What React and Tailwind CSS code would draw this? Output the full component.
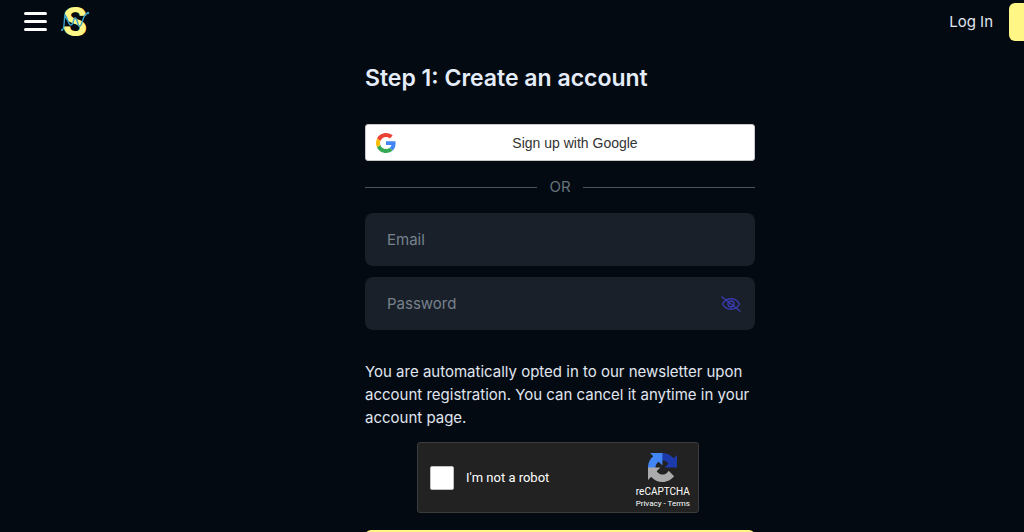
import { useState } from "react";

const Logo = () => (
  <svg width="32" height="44" viewBox="0 0 32 44" className="overflow-visible" aria-hidden="true">
    <text
      x="15"
      y="36"
      textAnchor="middle"
      className="fill-[#fff685] font-[Roboto,sans-serif] text-[40px] font-extrabold"
    >
      S
    </text>
    <path
      d="M2 30 C5 30 4 16 5 15 C8 18 8 25 11 25 C14 25 13 18 15 18 C18 18 17 27 20 26 C23 25 22 14 28 13"
      fill="none"
      stroke="#3aa0c8"
      strokeWidth="1.4"
      strokeLinecap="round"
    />
    <circle cx="2" cy="30" r="1" fill="#3aa0c8" />
    <circle cx="28" cy="13" r="1.2" fill="#3aa0c8" />
  </svg>
);

const GoogleIcon = () => (
  <svg width="20" height="20" viewBox="0 0 48 48" aria-hidden="true">
    <path fill="#EA4335" d="M24 9.5c3.54 0 6.71 1.22 9.21 3.6l6.85-6.85C35.9 2.38 30.47 0 24 0 14.62 0 6.51 5.38 2.56 13.22l7.98 6.19C12.43 13.72 17.74 9.5 24 9.5z" />
    <path fill="#4285F4" d="M46.98 24.55c0-1.57-.15-3.09-.38-4.55H24v9.02h12.94c-.58 2.96-2.26 5.48-4.78 7.18l7.73 6c4.51-4.18 7.09-10.36 7.09-17.65z" />
    <path fill="#FBBC05" d="M10.53 28.59c-.48-1.45-.76-2.99-.76-4.59s.27-3.14.76-4.59l-7.98-6.19C.92 16.46 0 20.12 0 24c0 3.88.92 7.54 2.56 10.78l7.97-6.19z" />
    <path fill="#34A853" d="M24 48c6.48 0 11.93-2.13 15.89-5.81l-7.73-6c-2.15 1.45-4.92 2.3-8.16 2.3-6.26 0-11.57-4.22-13.47-9.91l-7.98 6.19C6.51 42.62 14.62 48 24 48z" />
  </svg>
);

const EyeSlashIcon = () => (
  <svg
    width="20"
    height="20"
    viewBox="0 0 20 20"
    fill="none"
    stroke="#3a3aad"
    strokeWidth="1.4"
    strokeLinecap="round"
    aria-hidden="true"
  >
    <path d="M1.5 10C3.2 6.8 6.2 4.8 10 4.8s6.8 2 8.5 5.2c-1.7 3.2-4.7 5.2-8.5 5.2S3.2 13.2 1.5 10z" />
    <circle cx="10" cy="10" r="3" />
    <path d="M1 3l18 14" />
  </svg>
);

const RecaptchaIcon = () => (
  <svg width="29" height="29" viewBox="0 0 64 64" aria-hidden="true">
    <path fill="#1c3aa9" d="M64 31.96c0-.46-.01-.92-.03-1.37V4.64l-7.18 7.17C50.92 4.62 41.99.03 31.98.03c-10.41 0-19.66 4.97-25.5 12.66l11.76 11.88a15.6 15.6 0 0 1 4.76-5.34c2.05-1.6 4.96-2.91 8.98-2.91.49 0 .86.06 1.14.16 4.98.4 9.3 3.14 11.84 7.13l-8.32 8.32c10.54-.04 22.45-.07 27.36.03" />
    <path fill="#4285f4" d="M31.86.04c-.46 0-.91.01-1.37.03H4.54l7.17 7.18C4.52 13.12-.07 22.05-.07 32.06c0 10.41 4.97 19.66 12.66 25.5l11.88-11.76a15.6 15.6 0 0 1-5.34-4.76c-1.6-2.05-2.91-4.96-2.91-8.98 0-.49.06-.86.16-1.14.4-4.98 3.14-9.3 7.13-11.84l8.32 8.32c-.04-10.54-.07-22.45.03-27.36" />
    <path fill="#ababab" d="M0 32.04c0 .46.01.92.03 1.37v25.95l7.18-7.17c5.87 7.19 14.8 11.78 24.81 11.78 10.41 0 19.66-4.97 25.5-12.66L45.76 39.43a15.6 15.6 0 0 1-4.76 5.34c-2.05 1.6-4.96 2.91-8.98 2.91-.49 0-.86-.06-1.14-.16-4.98-.4-9.3-3.14-11.84-7.13l8.32-8.32c-10.54.04-22.45.07-27.36-.03" />
  </svg>
);

const Header = () => (
  <header className="flex h-[43px] items-center justify-between pl-6">
    <div className="flex items-center gap-3">
      <button type="button" aria-label="Menu" className="flex w-6 flex-col gap-[5px]">
        <span className="h-[3px] w-[23px] rounded-full bg-white" />
        <span className="h-[3px] w-[23px] rounded-full bg-white" />
        <span className="h-[3px] w-[23px] rounded-full bg-white" />
      </button>
      <a href="#home" aria-label="Home">
        <Logo />
      </a>
    </div>
    <div className="flex items-center gap-4">
      <a href="#login">Log In</a>
      <a href="#signup" aria-label="Sign up" className="h-[38px] w-[111px] rounded-md bg-[#fff685]" />
    </div>
  </header>
);

const App = () => {
  const [email, setEmail] = useState("");
  const [password, setPassword] = useState("");
  const [showPassword, setShowPassword] = useState(false);

  const handleSubmit = (e) => {
    e.preventDefault();
  };

  return (
    <div className="h-screen overflow-hidden bg-[#030a12] font-[Inter,sans-serif] text-[15px] leading-6 text-[#e0e6f0]">
      <div className="w-[calc(100%+96px)]">
        <Header />

        <main className="mx-auto w-full max-w-[390px] pt-[19px]">
          <h1 className="text-[23px] leading-8 font-semibold text-[#e6edfa]">
            Step 1: Create an account
          </h1>

          <button
            type="button"
            className="mt-[30px] flex h-[37px] w-full items-center rounded-[3px] border border-[#c8c8c8] bg-white pl-2.5 font-['Liberation_Sans',Arial,sans-serif] text-sm text-[#333]"
          >
            <GoogleIcon />
            <span className="flex-1 text-center">Sign up with Google</span>
          </button>

          <div className="mt-[14px] flex items-center gap-3 text-[#67727c]">
            <span className="h-px flex-1 bg-[#4b545d]" />
            <span>OR</span>
            <span className="h-px flex-1 bg-[#4b545d]" />
          </div>

          <form onSubmit={handleSubmit} className="mt-[14px]">
            <input
              type="email"
              aria-label="Email"
              placeholder="Email"
              value={email}
              onChange={(e) => setEmail(e.target.value)}
              className="block h-[53px] w-full rounded-lg bg-[#19202a] px-[22px] placeholder:text-[#77828c]"
            />
            <div className="mt-[11px] flex h-[53px] items-center rounded-lg bg-[#19202a] pr-3.5">
              <input
                type={showPassword ? "text" : "password"}
                aria-label="Password"
                placeholder="Password"
                value={password}
                onChange={(e) => setPassword(e.target.value)}
                className="h-full min-w-0 flex-1 bg-transparent pl-[22px] placeholder:text-[#77828c]"
              />
              <button
                type="button"
                aria-label="Show password"
                onClick={() => setShowPassword(!showPassword)}
              >
                <EyeSlashIcon />
              </button>
            </div>

            <p className="mt-[30px] leading-[23px]">
              You are automatically opted in to our newsletter upon account registration. You can
              cancel it anytime in your account page.
            </p>

            <div className="mt-[13px] mr-14 ml-13 flex h-[71px] items-center justify-between rounded-[3px] border border-[#3c3c3c] bg-[#222] pr-2 pl-3 font-[Roboto,sans-serif] text-white">
              <label className="flex items-center gap-3 text-[13px]">
                <input
                  type="checkbox"
                  className="size-6 appearance-none rounded-[2px] border border-[#c1c1c1] bg-white checked:bg-[#4285f4]"
                />
                I'm not a robot
              </label>
              <div className="flex flex-col items-center pt-2">
                <RecaptchaIcon />
                <span className="mt-1 text-[10px] leading-3">reCAPTCHA</span>
                <span className="text-[8px] leading-3">
                  <a href="#privacy">Privacy</a> - <a href="#terms">Terms</a>
                </span>
              </div>
            </div>

            <button
              type="submit"
              aria-label="Create account"
              className="mt-[17px] h-10 w-full rounded-md bg-[#fff685]"
            />
          </form>
        </main>
      </div>
    </div>
  );
};

export default App;
